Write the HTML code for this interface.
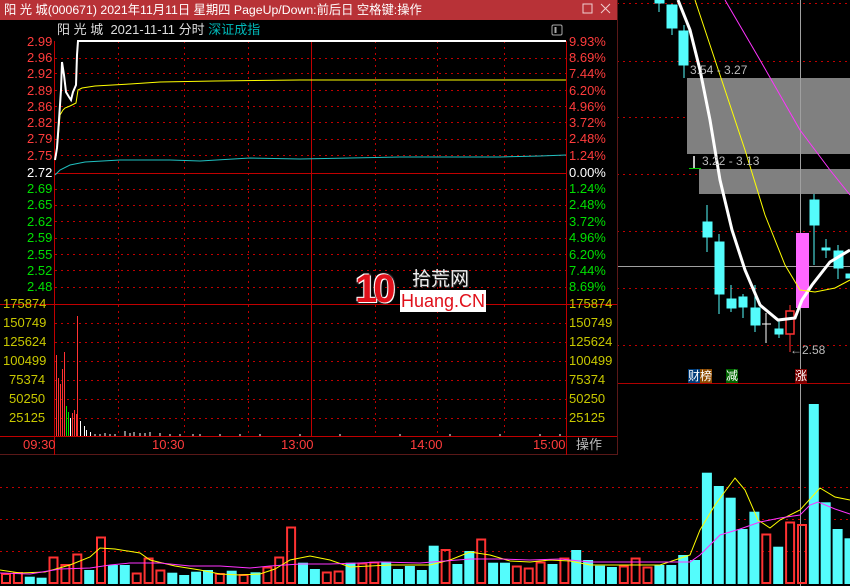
<!DOCTYPE html>
<html><head><meta charset="utf-8"><style>
body{margin:0;width:850px;height:586px;background:#000;overflow:hidden;position:relative;font-family:"Liberation Sans","Noto Sans CJK SC",sans-serif}
.t{position:absolute;white-space:nowrap;font-size:13px;line-height:14px}
.r{color:#ff3c3c}.g{color:#00e000}.y{color:#c8c800}
</style></head><body>
<svg width="850" height="586" style="position:absolute;left:0;top:0">
<g stroke="#c00000" stroke-dasharray="2,4" stroke-width="1">
<line x1="617" y1="3.5" x2="850" y2="3.5"/><line x1="617" y1="61.5" x2="850" y2="61.5"/><line x1="617" y1="117.5" x2="850" y2="117.5"/><line x1="617" y1="174.5" x2="850" y2="174.5"/><line x1="617" y1="231.5" x2="850" y2="231.5"/><line x1="617" y1="288.5" x2="850" y2="288.5"/><line x1="617" y1="345.5" x2="850" y2="345.5"/>
<line x1="0" y1="487.5" x2="850" y2="487.5"/><line x1="0" y1="519.5" x2="850" y2="519.5"/><line x1="0" y1="551.5" x2="850" y2="551.5"/>
</g>
<rect x="687" y="78" width="163" height="76" fill="#808080"/>
<rect x="699" y="169" width="151" height="25" fill="#808080"/>
<line x1="800.5" y1="0" x2="800.5" y2="586" stroke="#a0a0a0"/>
<line x1="617" y1="266.5" x2="850" y2="266.5" stroke="#a0a0a0"/>
<line x1="617" y1="383.5" x2="850" y2="383.5" stroke="#b00000"/>
<g fill="#54fcfc" stroke="#54fcfc">
<line x1="659" y1="0" x2="659" y2="12"/><rect x="655" y="0" width="9" height="3"/>
<line x1="672" y1="4" x2="672" y2="35"/><rect x="667" y="5" width="10" height="23"/>
<line x1="684" y1="25" x2="684" y2="78"/><rect x="679" y="31" width="9" height="34"/>
<line x1="707" y1="205" x2="707" y2="252"/><rect x="703" y="222" width="9" height="15"/>
<line x1="719" y1="234" x2="719" y2="314"/><rect x="715" y="242" width="9" height="52"/>
<line x1="731" y1="285" x2="731" y2="312"/><rect x="727" y="299" width="9" height="9"/>
<line x1="743" y1="294" x2="743" y2="318"/><rect x="739" y="297" width="8" height="10"/>
<line x1="755" y1="285" x2="755" y2="332"/><rect x="751" y="308" width="9" height="17"/>
<line x1="779" y1="319" x2="779" y2="338"/><rect x="775" y="329" width="8" height="5"/>
<line x1="814" y1="194" x2="814" y2="265"/><rect x="810" y="200" width="9" height="25"/>
<line x1="826" y1="239" x2="826" y2="258"/><rect x="822" y="248" width="8" height="2"/>
<line x1="838" y1="245" x2="838" y2="279"/><rect x="834" y="251" width="9" height="17"/>
<rect x="846" y="274" width="4" height="4"/>
</g>
<line x1="766" y1="313" x2="766" y2="343" stroke="#fff"/><line x1="762" y1="324" x2="771" y2="324" stroke="#fff"/>
<line x1="790" y1="305" x2="790" y2="352" stroke="#ff3232"/><rect x="786" y="311" width="8" height="23" fill="#000" stroke="#ff3232" stroke-width="1.5"/>
<rect x="796" y="233" width="13" height="75" fill="#ff66ff"/>
<polyline points="678,0 690,30 700,70 710,120 720,180 732,230 745,270 760,305 778,320 795,318 802,300 812,285 830,262 850,250" fill="none" stroke="#fff" stroke-width="3"/>
<polyline points="695,0 720,75 745,150 765,215 785,265 800,290 815,292 835,288 850,280" fill="none" stroke="#ffff00" stroke-width="1"/>
<polyline points="725,0 760,60 800,130 830,170 850,195" fill="none" stroke="#ff33ff" stroke-width="1"/>
<line x1="694" y1="156" x2="694" y2="168" stroke="#fff" stroke-width="1.5"/><line x1="689" y1="168.5" x2="701" y2="168.5" stroke="#0c0"/>
<g fill="#54fcfc">
<rect x="24.8" y="576.7" width="10" height="7.3"/><rect x="36.6" y="577.7" width="10" height="6.3"/><rect x="84.2" y="570" width="10" height="14"/><rect x="107.9" y="565" width="10" height="19"/><rect x="119.8" y="565" width="10" height="19"/><rect x="167.3" y="572.7" width="10" height="11.3"/><rect x="179.2" y="575" width="10" height="9"/><rect x="191.1" y="571.7" width="10" height="12.3"/><rect x="203" y="570" width="10" height="14"/><rect x="226.7" y="570.7" width="10" height="13.3"/><rect x="250.5" y="572.3" width="10" height="11.7"/><rect x="298" y="562.7" width="10" height="21.3"/><rect x="309.9" y="569" width="10" height="15"/><rect x="345.5" y="562.7" width="10" height="21.3"/><rect x="381.2" y="561.7" width="10" height="22.3"/><rect x="393" y="569" width="10" height="15"/><rect x="404.9" y="566" width="10" height="18"/><rect x="416.8" y="570" width="10" height="14"/><rect x="428.7" y="545.7" width="10" height="38.3"/><rect x="452.4" y="564" width="10" height="20"/><rect x="464.3" y="551" width="10" height="33"/><rect x="488.1" y="562.7" width="10" height="21.3"/><rect x="500" y="562.7" width="10" height="21.3"/><rect x="547.5" y="564" width="10" height="20"/><rect x="571.2" y="550" width="10" height="34"/><rect x="583.1" y="560" width="10" height="24"/><rect x="595" y="565.7" width="10" height="18.3"/><rect x="606.9" y="567" width="10" height="17"/><rect x="654.4" y="565" width="10" height="19"/><rect x="666.3" y="565" width="10" height="19"/><rect x="678.2" y="555" width="10" height="29"/><rect x="690" y="560" width="10" height="24"/><rect x="701.9" y="472.7" width="10" height="111.3"/><rect x="713.8" y="486" width="10" height="98"/><rect x="725.7" y="497.7" width="10" height="86.3"/><rect x="737.6" y="529" width="10" height="55"/><rect x="749.4" y="511.7" width="10" height="72.3"/><rect x="773.2" y="546.7" width="10" height="37.3"/><rect x="808.8" y="404" width="10" height="180"/><rect x="820.7" y="502.3" width="10" height="81.7"/><rect x="832.6" y="529" width="10" height="55"/><rect x="844.5" y="538.3" width="10" height="45.7"/>
</g>
<g fill="none" stroke="#ff3232" stroke-width="2">
<rect x="2" y="574" width="8" height="9"/><rect x="13.9" y="573" width="8" height="10"/><rect x="49.5" y="557.5" width="8" height="25.5"/><rect x="61.4" y="565" width="8" height="18"/><rect x="73.3" y="554.5" width="8" height="28.5"/><rect x="97" y="537.5" width="8" height="45.5"/><rect x="144.6" y="558.5" width="8" height="24.5"/><rect x="156.4" y="570.5" width="8" height="12.5"/><rect x="132.7" y="573.5" width="8" height="9.5"/><rect x="215.8" y="574" width="8" height="9"/><rect x="239.6" y="575" width="8" height="8"/><rect x="263.4" y="567.5" width="8" height="15.5"/><rect x="275.2" y="557.5" width="8" height="25.5"/><rect x="287.1" y="527.5" width="8" height="55.5"/><rect x="322.8" y="572.5" width="8" height="10.5"/><rect x="334.6" y="571.5" width="8" height="11.5"/><rect x="358.4" y="563.5" width="8" height="19.5"/><rect x="370.3" y="562.5" width="8" height="20.5"/><rect x="441.6" y="550" width="8" height="33"/><rect x="477.2" y="539.5" width="8" height="43.5"/><rect x="512.8" y="566.5" width="8" height="16.5"/><rect x="524.7" y="568.5" width="8" height="14.5"/><rect x="536.6" y="562.5" width="8" height="20.5"/><rect x="560.4" y="558.5" width="8" height="24.5"/><rect x="619.8" y="566.5" width="8" height="16.5"/><rect x="631.6" y="558.5" width="8" height="24.5"/><rect x="643.5" y="567.5" width="8" height="15.5"/><rect x="762.3" y="534.5" width="8" height="48.5"/><rect x="786.1" y="522.5" width="8" height="60.5"/><rect x="798" y="525" width="8" height="58"/>
</g>
<polyline points="0,570 20,573 45,572 70,565 90,557 100,548 115,549 140,553 150,560 175,566 200,570 220,574 240,575 260,574 275,569 290,560 310,556 330,560 350,567 370,566 390,565 410,565 430,565 450,560 470,552 490,555 510,561 530,562 550,560 570,561 590,565 610,565 630,565 660,565 690,555 700,530 715,505 735,478 745,490 758,520 770,528 780,520 800,510 820,488 835,497 850,500" fill="none" stroke="#ffff00"/>
<polyline points="0,573 30,574 60,569 90,568 110,565 130,563 160,563 190,566 220,566 250,568 270,566 300,564 330,564 360,563 380,562 420,563 470,559 500,559 530,560 560,559 590,562 620,562 660,562 690,562 700,555 720,535 740,529 760,522 780,518 800,515 810,505 818,502 835,509 850,514" fill="none" stroke="#ff33ff"/>
<rect x="0" y="0" width="617" height="20" fill="#b83237"/>
<rect x="0" y="20" width="617" height="435" fill="#000"/>
<line x1="617.5" y1="0" x2="617.5" y2="455" stroke="#5a1818"/>
<line x1="0" y1="454.5" x2="617" y2="454.5" stroke="#5a1818"/>
<rect x="583" y="4" width="9" height="9" fill="none" stroke="#f0d0d0" stroke-width="1"/>
<path d="M601 4 L610 13 M610 4 L601 13" stroke="#f0d0d0"/>
<rect x="552" y="25" width="10" height="10" rx="1.5" fill="none" stroke="#aaa"/><line x1="555.5" y1="27" x2="555.5" y2="33" stroke="#aaa" stroke-width="2"/>
<g stroke="#c00000" stroke-dasharray="2,4">
<line x1="55" y1="58.5" x2="566" y2="58.5"/><line x1="55" y1="73.5" x2="566" y2="73.5"/><line x1="55" y1="90.5" x2="566" y2="90.5"/><line x1="55" y1="106.5" x2="566" y2="106.5"/><line x1="55" y1="122.5" x2="566" y2="122.5"/><line x1="55" y1="139.5" x2="566" y2="139.5"/><line x1="55" y1="155.5" x2="566" y2="155.5"/><line x1="55" y1="189.5" x2="566" y2="189.5"/><line x1="55" y1="205.5" x2="566" y2="205.5"/><line x1="55" y1="221.5" x2="566" y2="221.5"/><line x1="55" y1="238.5" x2="566" y2="238.5"/><line x1="55" y1="254.5" x2="566" y2="254.5"/><line x1="55" y1="270.5" x2="566" y2="270.5"/><line x1="55" y1="287.5" x2="566" y2="287.5"/>
<line x1="55" y1="323.5" x2="566" y2="323.5"/><line x1="55" y1="342.5" x2="566" y2="342.5"/><line x1="55" y1="361.5" x2="566" y2="361.5"/><line x1="55" y1="380.5" x2="566" y2="380.5"/><line x1="55" y1="399.5" x2="566" y2="399.5"/><line x1="55" y1="418.5" x2="566" y2="418.5"/>
<line x1="118.5" y1="41" x2="118.5" y2="436"/><line x1="184.5" y1="41" x2="184.5" y2="436"/><line x1="248.5" y1="41" x2="248.5" y2="436"/><line x1="375.5" y1="41" x2="375.5" y2="436"/><line x1="437.5" y1="41" x2="437.5" y2="436"/><line x1="504.5" y1="41" x2="504.5" y2="436"/>
</g>
<g stroke="#c00000">
<line x1="54.5" y1="41" x2="54.5" y2="455"/><line x1="566.5" y1="41" x2="566.5" y2="455"/><line x1="311.5" y1="41" x2="311.5" y2="436"/>
<line x1="54" y1="173.5" x2="566" y2="173.5"/><line x1="0" y1="304.5" x2="617" y2="304.5"/><line x1="0" y1="436.5" x2="617" y2="436.5"/>
</g>
<polyline points="55,175 60,170 70,165 85,162 120,160 170,160 200,161 250,158 300,159 350,158 400,157 450,157 500,157 540,156 566,155" fill="none" stroke="#20c0c0"/>
<polyline points="55,160 58,140 60,115 63,110 65,108 70,106 76,103 78,90 82,88 95,86 130,84 160,82 215,81 300,80 566,80" fill="none" stroke="#ffff00"/>
<polyline points="55,160 57,148 59,120 61,90 62,62 64,75 66,92 69,97 71,100 73,92 76,85 77,55 78,41 566,41" fill="none" stroke="#fff" stroke-width="2"/>
<g stroke-width="1">
<line x1="56.5" y1="436" x2="56.5" y2="355" stroke="#ff3232"/><line x1="58.5" y1="436" x2="58.5" y2="378" stroke="#ff3232"/><line x1="60.5" y1="436" x2="60.5" y2="384" stroke="#ff3232"/><line x1="62.5" y1="436" x2="62.5" y2="369" stroke="#ff3232"/><line x1="64.5" y1="436" x2="64.5" y2="352" stroke="#ff3232"/><line x1="66.5" y1="436" x2="66.5" y2="406" stroke="#00e000"/><line x1="68.5" y1="436" x2="68.5" y2="412" stroke="#00e000"/><line x1="70.5" y1="436" x2="70.5" y2="418" stroke="#fff"/><line x1="72.5" y1="436" x2="72.5" y2="413" stroke="#ff3232"/><line x1="74.5" y1="436" x2="74.5" y2="410" stroke="#ff3232"/><line x1="76.5" y1="436" x2="76.5" y2="414" stroke="#ff3232"/><line x1="77.5" y1="436" x2="77.5" y2="316" stroke="#ff3232"/><line x1="80.5" y1="436" x2="80.5" y2="421" stroke="#fff"/><line x1="84.5" y1="436" x2="84.5" y2="426" stroke="#fff"/><line x1="86.5" y1="436" x2="86.5" y2="430" stroke="#fff"/><line x1="90.5" y1="436" x2="90.5" y2="432" stroke="#fff"/>
</g>
<path d="M95 436V434M100 436V434M105 436V433M110 436V434M115 436V434M125 436V431M130 436V433M134 436V432M140 436V433M145 436V433M150 436V432M160 436V433M170 436V434M180 436V434M193 436V434M200 436V434M220 436V434M240 436V434M260 436V434M300 436V434M340 436V434M400 436V434M450 436V434M500 436V434M540 436V434M560 436V434" stroke="#fff"/>
<rect x="400" y="290" width="86" height="22" fill="#fff"/>
</svg>
<div class="t" style="left:4px;top:3px;color:#fff;font-size:12.3px">阳 光 城(000671) 2021年11月11日 星期四 PageUp/Down:前后日 空格键:操作</div>
<div class="t" style="left:57px;top:23px;color:#ddd">阳 光 城&nbsp; 2021-11-11 分时 <span style="color:#00b8b8">深证成指</span></div>
<div class="t r" style="left:27px;top:35px">2.99</div><div class="t r" style="left:27px;top:51px">2.96</div><div class="t r" style="left:27px;top:67px">2.92</div><div class="t r" style="left:27px;top:84px">2.89</div><div class="t r" style="left:27px;top:100px">2.86</div><div class="t r" style="left:27px;top:116px">2.82</div><div class="t r" style="left:27px;top:132px">2.79</div><div class="t r" style="left:27px;top:149px">2.75</div>
<div class="t" style="left:27px;top:166px;color:#fff">2.72</div>
<div class="t g" style="left:27px;top:182px">2.69</div><div class="t g" style="left:27px;top:198px">2.65</div><div class="t g" style="left:27px;top:215px">2.62</div><div class="t g" style="left:27px;top:231px">2.59</div><div class="t g" style="left:27px;top:248px">2.55</div><div class="t g" style="left:27px;top:264px">2.52</div><div class="t g" style="left:27px;top:280px">2.48</div>
<div class="t r" style="left:569px;top:35px">9.93%</div><div class="t r" style="left:569px;top:51px">8.69%</div><div class="t r" style="left:569px;top:67px">7.44%</div><div class="t r" style="left:569px;top:84px">6.20%</div><div class="t r" style="left:569px;top:100px">4.96%</div><div class="t r" style="left:569px;top:116px">3.72%</div><div class="t r" style="left:569px;top:132px">2.48%</div><div class="t r" style="left:569px;top:149px">1.24%</div>
<div class="t" style="left:569px;top:166px;color:#fff">0.00%</div>
<div class="t g" style="left:569px;top:182px">1.24%</div><div class="t g" style="left:569px;top:198px">2.48%</div><div class="t g" style="left:569px;top:215px">3.72%</div><div class="t g" style="left:569px;top:231px">4.96%</div><div class="t g" style="left:569px;top:248px">6.20%</div><div class="t g" style="left:569px;top:264px">7.44%</div><div class="t g" style="left:569px;top:280px">8.69%</div>
<div class="t y" style="left:3px;top:297px">175874</div><div class="t y" style="left:3px;top:316px">150749</div><div class="t y" style="left:3px;top:335px">125624</div><div class="t y" style="left:3px;top:354px">100499</div><div class="t y" style="left:9px;top:373px">75374</div><div class="t y" style="left:9px;top:392px">50250</div><div class="t y" style="left:9px;top:411px">25125</div>
<div class="t y" style="left:569px;top:297px">175874</div><div class="t y" style="left:569px;top:316px">150749</div><div class="t y" style="left:569px;top:335px">125624</div><div class="t y" style="left:569px;top:354px">100499</div><div class="t y" style="left:569px;top:373px">75374</div><div class="t y" style="left:569px;top:392px">50250</div><div class="t y" style="left:569px;top:411px">25125</div>
<div class="t r" style="left:23px;top:438px">09:30</div><div class="t r" style="left:152px;top:438px">10:30</div><div class="t r" style="left:281px;top:438px">13:00</div><div class="t r" style="left:410px;top:438px">14:00</div><div class="t r" style="left:533px;top:438px">15:00</div>
<div class="t" style="left:576px;top:438px;color:#bbb">操作</div>
<div class="t" style="left:690px;top:63px;color:#bbb;font-size:12px">3.54 - 3.27</div>
<div class="t" style="left:702px;top:154px;color:#bbb;font-size:12px">3.22 - 3.13</div>
<div class="t" style="left:790px;top:343px;color:#bbb;font-size:12px">←2.58</div>
<div class="t" style="left:688px;top:369px;font-size:12px;color:#fff"><span style="background:#003c78">财</span><span style="background:#8c4a00">榜</span></div>
<div class="t" style="left:726px;top:369px;font-size:12px;color:#fff;background:#006400">减</div>
<div class="t" style="left:795px;top:369px;font-size:12px;color:#fff;background:#780000">涨</div>
<div class="t" style="left:355px;top:268px;font-size:40px;line-height:42px;font-weight:bold;color:#e0101a;letter-spacing:-4px;text-shadow:0 0 2px #fff,1px 1px 0 #fff,-1px -1px 0 #fff">10</div>
<div class="t" style="left:412px;top:269px;font-size:19px;line-height:22px;color:#eee;text-shadow:1px 1px 0 #333">拾荒网</div>
<div class="t" style="left:401px;top:291px;font-size:18px;line-height:20px;color:#e0101a">Huang.CN</div>
</body></html>
